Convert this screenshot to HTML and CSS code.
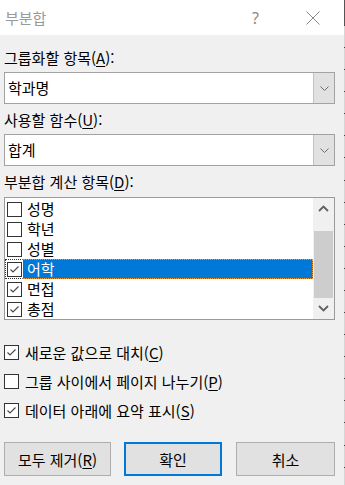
FILE: index.html
```html
<!DOCTYPE html>
<html lang="ko">
<head>
<meta charset="utf-8">
<title>부분합</title>
<link rel="stylesheet" href="styles.css">
</head>
<body>
<div class="screen">
  <div class="dialog">
    <div class="titlebar">
      <span class="title">부분합</span>
      <span class="tbtn help">?</span>
      <span class="tbtn close"><svg width="14" height="14" viewBox="0 0 14 14"><path d="M0.5 0.5L13.5 13.5M13.5 0.5L0.5 13.5" stroke="#8a8a8a" stroke-width="1" fill="none"/></svg></span>
    </div>
    <div class="content">
      <div class="label l1">그룹화할 항목(<u>A</u>):</div>
      <div class="combo">
        <span class="combo-text">학과명</span>
        <span class="combo-btn"><svg width="9" height="5" viewBox="0 0 9 5"><path d="M0.5 0.5L4.5 4.5L8.5 0.5" stroke="#6d6d6d" stroke-width="1" fill="none"/></svg></span>
      </div>
      <div class="label l2">사용할 함수(<u>U</u>):</div>
      <div class="combo">
        <span class="combo-text">합계</span>
        <span class="combo-btn"><svg width="9" height="5" viewBox="0 0 9 5"><path d="M0.5 0.5L4.5 4.5L8.5 0.5" stroke="#6d6d6d" stroke-width="1" fill="none"/></svg></span>
      </div>
      <div class="label l3">부분합 계산 항목(<u>D</u>):</div>
      <div class="list">
        <div class="rows">
          <div class="row"><span class="cb-cell"><span class="box"></span></span><span class="item">성명</span></div>
          <div class="row"><span class="cb-cell"><span class="box"></span></span><span class="item">학년</span></div>
          <div class="row"><span class="cb-cell"><span class="box"></span></span><span class="item">성별</span></div>
          <div class="row sel"><span class="cb-cell"><span class="box"><svg width="13" height="13" viewBox="0 0 13 13"><path d="M2.5 6.5L5 9L10.5 3.5" stroke="#4a4a4a" stroke-width="1.2" fill="none"/></svg></span></span><span class="item">어학</span></div>
          <div class="row"><span class="cb-cell"><span class="box"><svg width="13" height="13" viewBox="0 0 13 13"><path d="M2.5 6.5L5 9L10.5 3.5" stroke="#4a4a4a" stroke-width="1.2" fill="none"/></svg></span></span><span class="item">면접</span></div>
          <div class="row"><span class="cb-cell"><span class="box"><svg width="13" height="13" viewBox="0 0 13 13"><path d="M2.5 6.5L5 9L10.5 3.5" stroke="#4a4a4a" stroke-width="1.2" fill="none"/></svg></span></span><span class="item">총점</span></div>
        </div>
        <div class="scrollbar">
          <span class="sbtn"><svg width="11" height="7" viewBox="0 0 11 7"><path d="M1 6L5.5 1.5L10 6" stroke="#606060" stroke-width="1.8" fill="none"/></svg></span>
          <span class="track"><span class="thumb"></span></span>
          <span class="sbtn"><svg width="11" height="7" viewBox="0 0 11 7"><path d="M1 1L5.5 5.5L10 1" stroke="#606060" stroke-width="1.8" fill="none"/></svg></span>
        </div>
      </div>
      <div class="checks">
        <div class="crow"><span class="box"><svg width="13" height="13" viewBox="0 0 13 13"><path d="M2.5 6.5L5 9L10.5 3.5" stroke="#4a4a4a" stroke-width="1.2" fill="none"/></svg></span><span class="ctext">새로운 값으로 대치(<u>C</u>)</span></div>
        <div class="crow"><span class="box"></span><span class="ctext">그룹 사이에서 페이지 나누기(<u>P</u>)</span></div>
        <div class="crow"><span class="box"><svg width="13" height="13" viewBox="0 0 13 13"><path d="M2.5 6.5L5 9L10.5 3.5" stroke="#4a4a4a" stroke-width="1.2" fill="none"/></svg></span><span class="ctext">데이터 아래에 요약 표시(<u>S</u>)</span></div>
      </div>
      <div class="buttons">
        <span class="btn b1">모두 제거(<u>R</u>)</span>
        <span class="btn b2">확인</span>
        <span class="btn b3">취소</span>
      </div>
    </div>
  </div>
  <div class="edge"></div>
</div>
</body>
</html>
```
FILE: styles.css
```css
* { box-sizing: border-box; margin: 0; padding: 0; }
html, body { width: 345px; height: 485px; overflow: hidden; }
body {
  font-family: "Noto Sans CJK KR", "Noto Sans", sans-serif;
  font-size: 15px;
  color: #000;
  background: #f0f0f0;
}
u { text-underline-offset: 2px; }

.screen { display: flex; height: 485px; }
.dialog {
  width: 344px;
  height: 485px;
  background: #f0f0f0;
  display: flex;
  flex-direction: column;
}
.edge {
  width: 1px;
  height: 485px;
  background:
    linear-gradient(#555, #555) 0 0 / 1px 25px no-repeat,
    repeating-linear-gradient(to bottom, #444 0 1px, #d6d6d6 1px 22.08px) 0 25px / 1px 460px no-repeat;
}

.titlebar {
  height: 35px;
  background: #fff;
  display: flex;
  align-items: center;
  padding-right: 3px;
}
.title {
  flex: 1;
  padding-left: 5px;
  color: #999;
  font-size: 15px;
  line-height: 20px;
}
.tbtn {
  width: 57px;
  height: 35px;
  display: flex;
  align-items: center;
  justify-content: center;
  color: #8a8a8a;
}
.help { font-family: "Noto Sans", sans-serif; font-size: 16px; }

.content { padding: 0 9px 0 4px; }
.label { height: 20px; line-height: 20px; white-space: nowrap; }
.l1 { margin-top: 13px; }
.l2, .l3 { margin-top: 6px; }

.combo {
  margin-top: 4px;
  height: 32px;
  border: 1px solid #a2a2a2;
  background: #fff;
  display: flex;
}
.combo-text { flex: 1; padding-left: 3px; line-height: 30px; }
.combo-btn {
  width: 21px;
  background: #e1e1e1;
  border-left: 1px solid #c2c2c2;
  display: flex;
  align-items: center;
  justify-content: center;
}

.list {
  margin-top: 5px;
  height: 123px;
  border: 1px solid #9a9a9a;
  background: #fff;
  display: flex;
}
.rows { flex: 1; padding-top: 1px; }
.row { display: flex; height: 20px; }
.cb-cell {
  width: 18px;
  border: 1px solid transparent;
  padding-left: 1px;
  display: flex;
  align-items: center;
}
.item {
  flex: 1;
  border: 1px solid transparent;
  padding-left: 3px;
  line-height: 18px;
}
.row.sel .cb-cell {
  border-style: dotted;
  border-color: #333 transparent #333 #333;
}
.row.sel .item {
  background: #0078d7;
  color: #fff;
  border-style: dotted;
  border-color: #f39a3c #f39a3c #f39a3c transparent;
}

.box {
  width: 15px;
  height: 15px;
  border: 1px solid #333;
  background: #fff;
  display: flex;
  flex-shrink: 0;
}

.scrollbar {
  width: 21px;
  background: #f0f0f0;
  display: flex;
  flex-direction: column;
}
.sbtn {
  height: 21px;
  display: flex;
  align-items: center;
  justify-content: center;
}
.track { flex: 1; padding: 12px 1px 0; display: flex; }
.thumb { flex: 1; background: #cdcdcd; }

.checks { margin-top: 18px; }
.crow { height: 29px; display: flex; align-items: center; }
.ctext { margin-left: 6px; line-height: 20px; white-space: nowrap; }

.buttons { margin-top: 17px; display: flex; }
.btn {
  height: 34px;
  background: #e1e1e1;
  border: 1px solid #adadad;
  display: flex;
  align-items: center;
  justify-content: center;
  white-space: nowrap;
}
.b1 { width: 107px; }
.b2 { width: 98px; margin-left: 13px; border: 2px solid #0078d7; }
.b3 { width: 99px; margin-left: 14px; }
```
